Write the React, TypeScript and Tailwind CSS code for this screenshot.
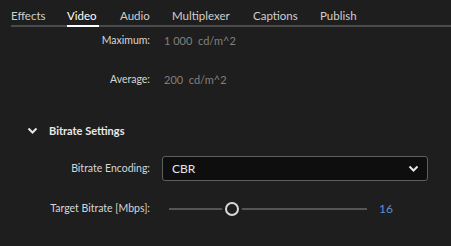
import React from "react";

const tabs = [
  { name: "Effects", w: "w-[56px]" },
  { name: "Video", w: "w-[53px]", active: true },
  { name: "Audio", w: "w-[52px]" },
  { name: "Multiplexer", w: "w-[81px]" },
  { name: "Captions", w: "w-[67px]" },
  { name: "Publish", w: "w-[60px]" },
];

export default function App() {
  return (
    <div
      className="w-[451px] h-[246px] bg-[#1e1e1e] text-[12px] overflow-hidden"
      style={{ fontFamily: 'Lato, "Open Sans", sans-serif' }}
    >
      <div className="pl-[11px]">
        <div className="flex h-[27px] border-b-2 border-[#4b4b4b]">
          {tabs.map((t) => (
            <div key={t.name} className={`${t.w} relative flex items-start pt-[7px]`}>
              <span className={t.active ? "text-white text-[11.5px]" : "text-[#cfcfcf] text-[11.5px]"}>{t.name}</span>
              {t.active && (
                <div className="absolute left-0 bottom-[-2px] w-[32px] h-[2px] bg-white" />
              )}
            </div>
          ))}
        </div>
      </div>

      <div className="flex items-center h-[14px] mt-[7px] text-[10.5px]">
        <div className="w-[150px] text-right text-[#d6d6d6]">Maximum:</div>
        <div className="ml-[14px] text-[#808080] text-[11px]">1 000&nbsp; cd/m^2</div>
      </div>

      <div className="flex items-center h-[14px] mt-[25px] text-[10.5px]">
        <div className="w-[150px] text-right text-[#d6d6d6]">Average:</div>
        <div className="ml-[14px] text-[#808080] text-[11px]">200&nbsp; cd/m^2</div>
      </div>

      <div className="flex items-center h-[16px] mt-[36px] text-[11px]">
        <svg className="ml-[27px] w-[11px] h-[8px]" viewBox="0 0 11 8">
          <path d="M1.5 1.5 L5.5 5.5 L9.5 1.5" fill="none" stroke="#e6e6e6" strokeWidth="2" />
        </svg>
        <span className="ml-[11px] text-[#e8e8e8] font-bold">Bitrate Settings</span>
      </div>

      <div className="flex items-center mt-[17px] h-[25px] text-[10.5px]">
        <div className="w-[150px] text-right text-[#d6d6d6]">Bitrate Encoding:</div>
        <div className="ml-[12px] w-[266px] h-[25px] rounded-[3px] border border-[#5f5f5f] bg-[#0e0e0e] flex items-center justify-between pl-[9px] pr-[8px]">
          <span className="text-[#e6e6e6] text-[12px]">CBR</span>
          <svg className="w-[11px] h-[8px]" viewBox="0 0 11 8">
            <path d="M1.5 1.5 L5.5 5.5 L9.5 1.5" fill="none" stroke="#e6e6e6" strokeWidth="2" />
          </svg>
        </div>
      </div>

      <div className="flex items-center mt-[21px] h-[14px] text-[10.5px]">
        <div className="w-[150px] text-right text-[#d6d6d6]">Target Bitrate [Mbps]:</div>
        <div className="ml-[19px] w-[198px] relative h-[14px] flex items-center">
          <div className="w-full h-[2px] bg-[#555555]" />
          <div className="absolute left-[56px] top-[0px] w-[14px] h-[14px] rounded-full border-2 border-[#d8d8d8] bg-[#1e1e1e] shadow-[0_0_0_3px_#1e1e1e]" />
        </div>
        <span className="ml-[12px] text-[#5e8fcf] text-[12px]">16</span>
      </div>
    </div>
  );
}
